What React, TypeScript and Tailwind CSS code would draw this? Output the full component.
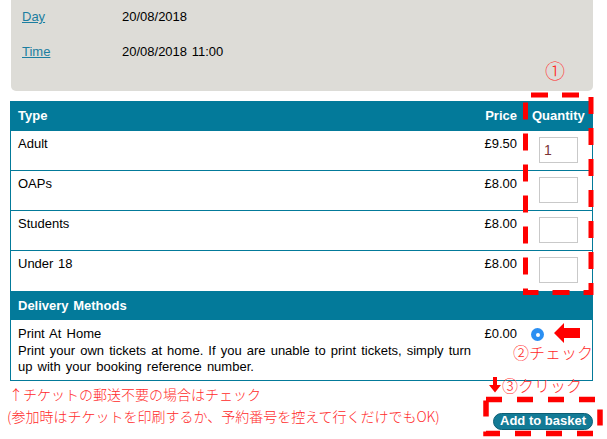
import React from "react";

const rows = [
  { type: "Adult", price: "£9.50", qty: "1" },
  { type: "OAPs", price: "£8.00", qty: "" },
  { type: "Students", price: "£8.00", qty: "" },
  { type: "Under 18", price: "£8.00", qty: "" },
];

const sans = { fontFamily: '"Liberation Sans", Arial, sans-serif' };
const jp = { fontFamily: '"Noto Sans CJK JP", "Noto Sans", sans-serif' };

export default function App() {
  return (
    <div className="relative w-[607px] h-[439px] overflow-hidden bg-white text-[13px] text-black [word-spacing:1px]" style={sans}>
      <div className="pl-[10px] w-[593px]">
        {/* event info */}
        <div className="ml-[1px] h-[91px] bg-[#dddcd7] rounded-b-[5px] pl-[11px] pt-[9px]">
          <div className="flex h-[35px] leading-[16px]">
            <a className="w-[100px] text-[#1b7ea0] underline">Day</a>
            <span>20/08/2018</span>
          </div>
          <div className="flex leading-[16px]">
            <a className="w-[100px] text-[#1b7ea0] underline">Time</a>
            <span>20/08/2018 11:00</span>
          </div>
        </div>

        {/* tickets table */}
        <div className="mt-[10px] border-x border-b border-[#037a9a]">
          <div className="flex h-[30px] items-center bg-[#037a9a] text-white font-bold">
            <div className="flex-1 pl-[7px]">Type</div>
            <div className="w-[60px] text-right pr-[8px]">Price</div>
            <div className="w-[67px] pl-[7px]">Quantity</div>
          </div>
          {rows.map((r, i) => (
            <div key={r.type} className={`flex h-[40px] ${i < rows.length - 1 ? "border-b border-[#037a9a]" : ""}`}>
              <div className="flex-1 pl-[7px] pt-[5px] leading-[16px]">{r.type}</div>
              <div className="w-[60px] text-right pr-[8px] pt-[5px] leading-[16px]">{r.price}</div>
              <div className="w-[67px] flex justify-center pt-[6px]">
                <div className="w-[39px] h-[26px] border border-[#c9c9c9] bg-white pl-[4px] pt-[4px] leading-[16px] text-[14px] font-light text-[#7a3434]">
                  {r.qty}
                </div>
              </div>
            </div>
          ))}
          <div className="flex h-[29px] items-center bg-[#037a9a] text-white font-bold pl-[7px]">Delivery Methods</div>
          <div className="flex h-[60px] leading-[16.5px] [word-spacing:1.5px]">
            <div className="flex-1 pl-[7px] pt-[6px]">
              <div>Print At Home</div>
              <div className="w-[459px]">
                Print your own tickets at home. If you are unable to print tickets, simply turn up with your booking reference number.
              </div>
            </div>
            <div className="w-[48px] text-right pr-[8px] pt-[6px]">£0.00</div>
            <div className="w-[67px] pl-[6px] pt-[8px]">
              <div className="w-[13px] h-[13px] rounded-full bg-[#2b8ff2] flex items-center justify-center">
                <div className="w-[4px] h-[4px] rounded-full bg-white" />
              </div>
            </div>
          </div>
        </div>

        {/* footer */}
        <div className="flex justify-between">
          <div className="pt-[2px] -ml-[3px] text-[14px] leading-[22px] text-[#ff2a2a] font-light [word-spacing:0px]" style={jp}>
            <div className="pl-[2px]">↑チケットの郵送不要の場合はチェック</div>
            <div>(参加時はチケットを印刷するか、予約番号を控えて行くだけでもOK)</div>
          </div>
          <div className="pt-[30px]">
            <button className="w-[100px] h-[17px] rounded-full bg-[#137b96] border border-[#0b5e74] text-white font-bold text-[13px] leading-[14px] [word-spacing:0px]" style={sans}>
              Add to basket
            </button>
          </div>
        </div>
      </div>

      {/* annotations */}
      <span className="absolute left-[545px] top-[58px] text-[20px] leading-[26px] text-[#ff2a2a] font-light" style={jp}>①</span>
      <span className="absolute left-[513px] top-[340px] text-[16px] leading-[24px] text-[#ff2a2a] font-light [word-spacing:0px]" style={jp}>②チェック</span>
      <span className="absolute left-[502px] top-[373px] text-[16px] leading-[24px] text-[#ff2a2a] font-light [word-spacing:0px]" style={jp}>③クリック</span>
      <svg className="absolute left-0 top-0 pointer-events-none" width="607" height="439">
        <rect x="525.5" y="95" width="65.5" height="197.5" fill="none" stroke="#ff0000" strokeWidth="5" strokeDasharray="17 14" strokeDashoffset="25.5" />
        <rect x="486" y="399.5" width="114" height="34" fill="none" stroke="#ff0000" strokeWidth="5.5" strokeDasharray="16 15" />
        <polygon points="554,333 564,323 564,328 580,328 580,338 564,338 564,343" fill="#ff0000" />
        <polygon points="493,377 497,377 497,385 501,385 495,392.5 489,385 493,385" fill="#ff0000" />
      </svg>
    </div>
  );
}
